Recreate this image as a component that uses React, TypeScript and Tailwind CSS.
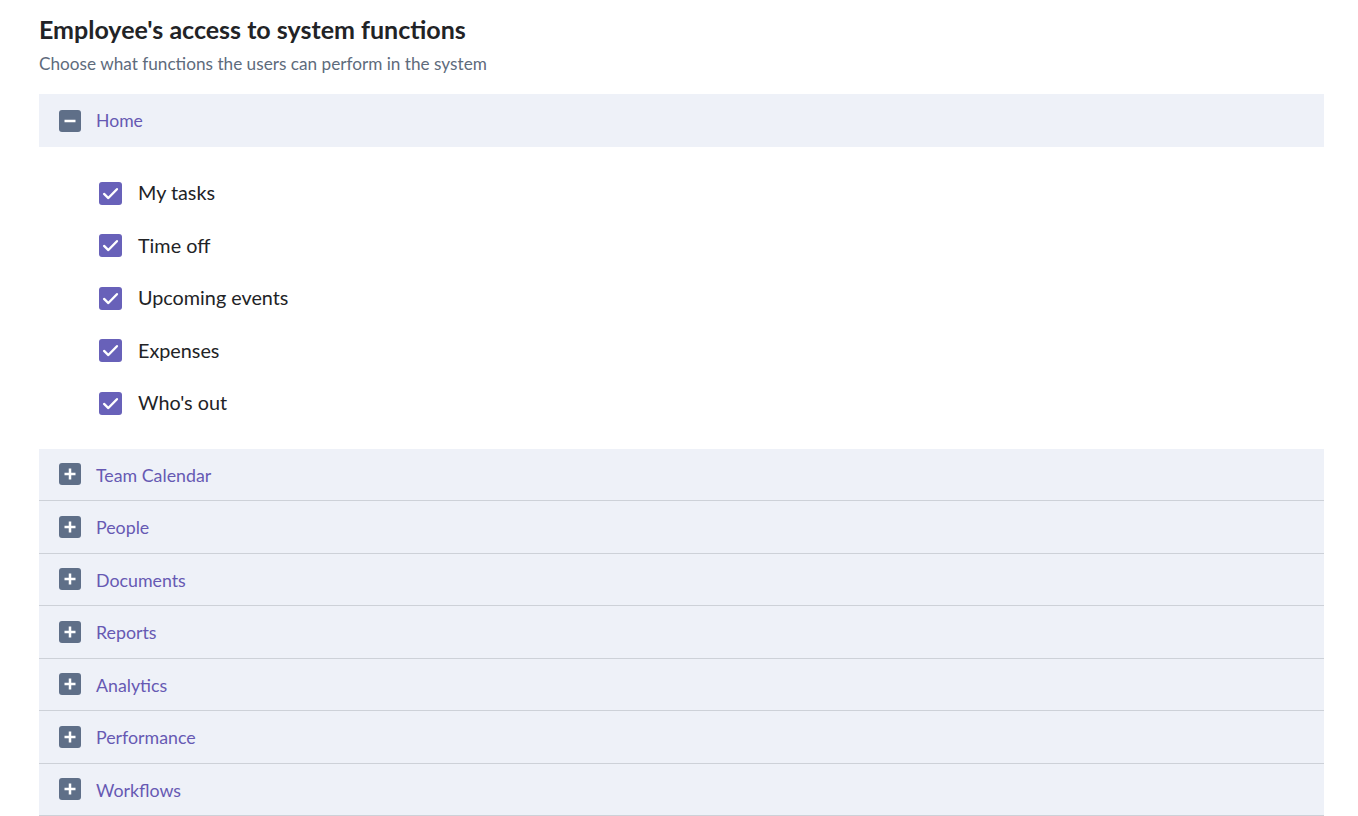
import React from "react";

const items = ["My tasks", "Time off", "Upcoming events", "Expenses", "Who's out"];
const sections = ["Team Calendar", "People", "Documents", "Reports", "Analytics", "Performance", "Workflows"];

function BoxIcon({ plus }: { plus: boolean }) {
  return (
    <div className="w-[22px] h-[22px] rounded-[3px] bg-[#5f6f88] flex items-center justify-center shrink-0">
      <svg width="14" height="14" viewBox="0 0 14 14">
        <rect x="1.5" y="5.75" width="11" height="2.5" fill="#fff" />
        {plus && <rect x="5.75" y="1.5" width="2.5" height="11" fill="#fff" />}
      </svg>
    </div>
  );
}

function Check() {
  return (
    <div className="w-[23px] h-[23px] rounded-[3px] bg-[#6861b9] flex items-center justify-center shrink-0">
      <svg width="19" height="19" viewBox="0 0 16 16">
        <path d="M2.6 8.4 L6.2 11.8 L13.4 4.4" stroke="#fff" strokeWidth="2" fill="none" strokeLinecap="round" strokeLinejoin="round" />
      </svg>
    </div>
  );
}

export default function App() {
  return (
    <div className="min-h-screen bg-white pl-[39px] pr-[34px] pt-[13px]" style={{ fontFamily: "Lato, 'Noto Sans', sans-serif" }}>
      <h1 className="text-[25px] font-bold text-[#222326] leading-[32px]">Employee's access to system functions</h1>
      <p className="text-[17.2px] text-[#5e6b7c] leading-[22px] mt-[8px]">Choose what functions the users can perform in the system</p>
      <div className="mt-[19px]">
        <div className="h-[53px] bg-[#eef1f8] flex items-center pl-[20px] gap-[15px]">
          <BoxIcon plus={false} />
          <span className="text-[17.6px] text-[#6659b3] pt-[2px]">Home</span>
        </div>
        <div className="pt-[20px] pb-[19px] pl-[60px]">
          {items.map((t) => (
            <div key={t} className="h-[52.5px] flex items-center gap-[16px]">
              <Check />
              <span className="text-[19.8px] text-[#222326]">{t}</span>
            </div>
          ))}
        </div>
        {sections.map((s) => (
          <div key={s} className="h-[52.5px] bg-[#eef1f8] border-b border-[#cdd1d8] flex items-center pl-[20px] gap-[15px]">
            <BoxIcon plus />
            <span className="text-[17.8px] text-[#6659b3] pt-[2px]">{s}</span>
          </div>
        ))}
      </div>
    </div>
  );
}
